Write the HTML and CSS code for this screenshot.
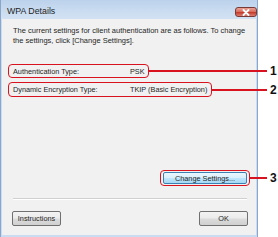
FILE: index.html
```html
<!DOCTYPE html>
<html lang="en">
<head>
<meta charset="utf-8">
<title>WPA Details</title>
<link rel="stylesheet" href="styles.css">
</head>
<body>
<div class="dialog">
  <div class="titlebar">
    <span class="title">WPA Details</span>
    <span class="close">
      <svg width="10" height="7" viewBox="0 0 10 7"><path d="M2.5 1 L7.5 6 M7.5 1 L2.5 6" stroke="#fff" stroke-width="1.8" stroke-linecap="round"/></svg>
    </span>
  </div>
  <div class="client">
    <p class="intro">The current settings for client authentication are as follows. To change the settings, click [Change Settings].</p>
    <div class="callout c1">
      <div class="hl">
        <span class="label">Authentication Type:</span>
        <span class="value">PSK</span>
      </div>
      <span class="leader"></span>
      <span class="num">1</span>
    </div>
    <div class="callout c2">
      <div class="hl">
        <span class="label">Dynamic Encryption Type:</span>
        <span class="value">TKIP (Basic Encryption)</span>
      </div>
      <span class="leader"></span>
      <span class="num">2</span>
    </div>
    <div class="callout c3">
      <div class="hl hl-btn">
        <button class="btn btn-focus">Change Settings...</button>
      </div>
      <span class="leader"></span>
      <span class="num">3</span>
    </div>
    <div class="sep"></div>
    <div class="footer">
      <button class="btn btn-instr">Instructions</button>
      <button class="btn btn-ok">OK</button>
    </div>
  </div>
</div>
</body>
</html>
```

FILE: styles.css
```css
html, body {
  margin: 0;
  padding: 0;
  background: #ffffff;
}
body {
  width: 278px;
  height: 237px;
  overflow: hidden;
  font-family: "Liberation Sans", Arial, sans-serif;
  color: #262626;
}
.dialog {
  width: 258px;
  height: 240px;
  box-sizing: border-box;
  background: #c9dcf1;
  border: 1px solid #8aa6c8;
  border-top: none;
  padding: 0 1px;
  display: flex;
  flex-direction: column;
}
.titlebar {
  height: 19px;
  flex: none;
  display: flex;
  align-items: flex-start;
  justify-content: space-between;
  background: linear-gradient(to bottom, #bcd2ec 0%, #cadcf0 60%, #d3e2f3 100%);
  margin: 0 -1px;
  padding: 0 0 0 6px;
}
.title {
  font-size: 8.8px;
  line-height: 9px;
  margin-top: 7px;
  color: #1e1e1e;
}
.close {
  width: 22px;
  height: 10px;
  margin-top: 7px;
  box-sizing: border-box;
  border: 1px solid #7a3a35;
  border-radius: 3px;
  background: linear-gradient(to bottom, #eaa397 0%, #d86f60 45%, #c53d2c 55%, #dc7d70 100%);
  display: flex;
  align-items: center;
  justify-content: center;
}
.close svg { display: block; }
.client {
  flex: 1;
  background: #f1f1f1;
  margin-bottom: 4px;
  padding: 0 8px 0 6px;
  display: flex;
  flex-direction: column;
}
.intro {
  margin: 7px 0 0 5px;
  font-size: 7.5px;
  line-height: 10px;
  width: 240px;
}
.callout {
  display: flex;
  align-items: center;
  margin-right: -30px;
}
.c1 { margin-top: 18px; }
.c2 { margin-top: 4px; }
.hl {
  display: flex;
  align-items: center;
  box-sizing: border-box;
  border: 1.5px solid #d8121e;
  border-radius: 4px;
  height: 14px;
  padding: 0 0 0 4px;
  font-size: 7.3px;
}
.c1 .hl { width: 141px; }
.c2 .hl { width: 204px; height: 15px; }
.label { width: 117px; flex: none; }
.value { white-space: nowrap; }
.leader {
  flex: 1;
  height: 2px;
  background: #d8121e;
}
.num {
  font-weight: bold;
  font-size: 12px;
  line-height: 12px;
  width: 7px;
  margin-left: 3px;
  margin-right: 1px;
  color: #111;
}
.c3 {
  margin-top: 73px;
  padding-left: 152px;
}
.hl-btn {
  padding: 0 2px;
  height: 16px;
  width: 90px;
  border-radius: 4px;
  justify-content: center;
}
.btn {
  font-family: "Liberation Sans", Arial, sans-serif;
  font-size: 7.3px;
  color: #262626;
  border: 1px solid #707070;
  border-radius: 2px;
  background: linear-gradient(to bottom, #f3f3f3 0%, #ebebeb 48%, #dcdcdc 52%, #d0d0d0 100%);
  height: 15px;
  padding: 0;
  margin: 0;
}
.btn-focus {
  width: 84px;
  height: 12px;
  border-color: #3c7fb1;
  background: linear-gradient(to bottom, #eaf6fd 0%, #d9f0fc 48%, #bee6fd 52%, #a7d9f5 100%);
}
.sep {
  margin: 12px 0 0 5px;
  width: 234px;
  height: 1px;
  background: #d0d0d0;
  border-bottom: 1px solid #ffffff;
}
.footer {
  margin-top: 11px;
  padding-left: 4px;
  display: flex;
  justify-content: space-between;
}
.btn-instr { width: 49px; }
.btn-ok { width: 49px; }
```
